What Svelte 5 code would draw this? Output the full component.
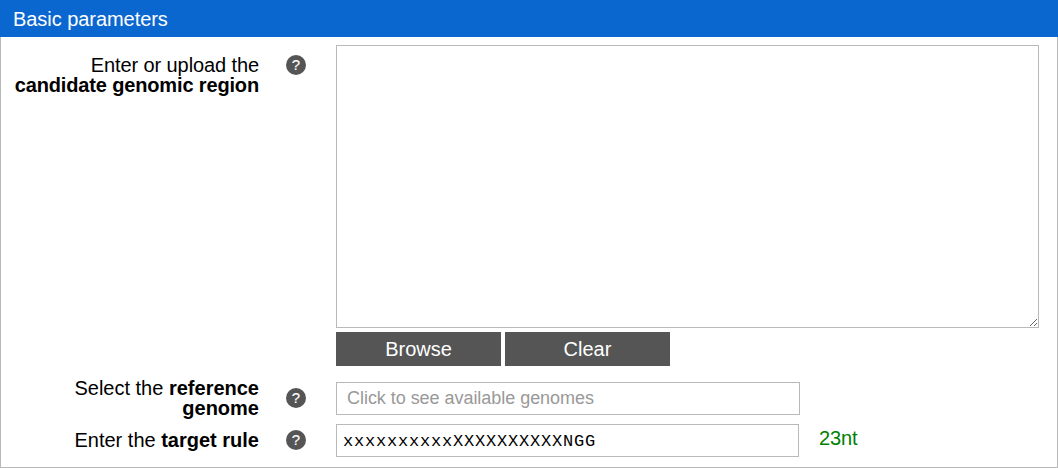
<script>
  let region = $state('');
  let genome = $state('');
  let rule = $state('xxxxxxxxxxXXXXXXXXXXNGG');
</script>

{#snippet help()}
  <span class="help" role="img" aria-label="Help">?</span>
{/snippet}

<section class="panel">
  <header>Basic parameters</header>
  <div class="body">
    <div class="row region">
      <label for="region">Enter or upload the<br /><b>candidate genomic region</b></label>
      {@render help()}
      <div class="field">
        <textarea id="region" bind:value={region}></textarea>
        <div class="buttons">
          <button type="button">Browse</button>
          <button type="button" onclick={() => (region = '')}>Clear</button>
        </div>
      </div>
    </div>
    <div class="row genome">
      <label for="genome">Select the <b>reference<br />genome</b></label>
      {@render help()}
      <input id="genome" placeholder="Click to see available genomes" bind:value={genome} />
    </div>
    <div class="row rule">
      <label for="rule">Enter the <b>target rule</b></label>
      {@render help()}
      <input id="rule" spellcheck="false" bind:value={rule} />
      <span class="count">{rule.length}nt</span>
    </div>
  </div>
</section>

<style>
  .panel {
    box-sizing: border-box;
    width: 1058px;
    height: 468px;
    font: 20px/20px 'Liberation Sans', Arial, sans-serif;
    color: #000;
    background: #fff;
    display: flex;
    flex-direction: column;
  }
  header {
    box-sizing: border-box;
    height: 37px;
    padding-left: 13px;
    line-height: 38px;
    letter-spacing: -0.05px;
    background: #0b67d0;
    color: #fff;
  }
  .body {
    box-sizing: border-box;
    flex: 1;
    border: 1px solid #b9b9b9;
    border-top: 0;
    padding-top: 8px;
  }
  .row {
    display: grid;
    grid-template-columns: 258px 47px auto 1fr;
    align-items: center;
  }
  .row.region {
    align-items: start;
    height: 321px;
  }
  .region label,
  .region .help {
    margin-top: 10px;
  }
  .row.genome {
    height: 40px;
    margin-top: 12px;
  }
  .row.rule {
    height: 32px;
    margin-top: 5px;
  }
  label {
    text-align: right;
    white-space: nowrap;
  }
  .region label {
    letter-spacing: -0.1px;
  }
  .region b {
    letter-spacing: -0.15px;
  }
  .help {
    width: 20px;
    height: 20px;
    margin-left: 27px;
    border-radius: 50%;
    background: #555;
    color: #fff;
    font-size: 15px;
    line-height: 20px;
    text-align: center;
    -webkit-text-stroke: 0.15px #fff;
  }
  textarea,
  input {
    box-sizing: border-box;
    margin: 0;
    border: 1px solid #b9b9b9;
    border-radius: 0;
    background: #fff;
    outline: 0;
  }
  textarea {
    display: block;
    width: 703px;
    height: 283px;
    resize: both;
  }
  .field,
  input {
    margin-left: 30px;
  }
  .buttons {
    display: flex;
    gap: 4px;
    margin-top: 4px;
  }
  button {
    width: 165px;
    height: 34px;
    padding: 0;
    border: 0;
    background: #555;
    color: #fff;
    font: 20px/34px 'Liberation Sans', Arial, sans-serif;
  }
  input {
    width: 464px;
    height: 33px;
    padding: 0 10px;
    font: 18px 'Liberation Sans', Arial, sans-serif;
  }
  #genome {
    letter-spacing: -0.04px;
    margin-top: 1px;
  }
  input::placeholder {
    color: #999;
    opacity: 1;
  }
  #rule {
    width: 463px;
    margin-top: 1px;
    padding: 2px 6px 0;
    font: 17px 'Courier New', 'Liberation Mono', monospace;
    letter-spacing: 0.798px;
    color: #000;
  }
  .count {
    margin-left: 20px;
    margin-top: -4px;
    letter-spacing: -0.1px;
    color: #008000;
  }
</style>
